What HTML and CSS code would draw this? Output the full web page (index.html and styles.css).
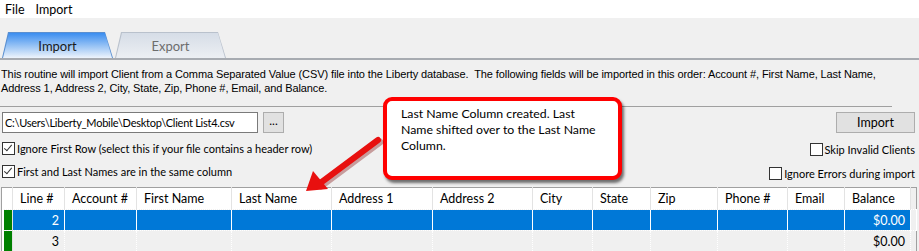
FILE: index.html
```html
<!DOCTYPE html>
<html lang="en">
<head>
    <meta charset="UTF-8">
    <title>Import Clients</title>
    <link rel="stylesheet" href="styles.css">
</head>
<body>

    <div class="menubar">
        <span class="menu-item">File</span>
        <span class="menu-item">Import</span>
    </div>

    <div class="tabs">
        <div class="tab tab-active"><div class="tab-inner">Import</div></div>
        <div class="tab"><div class="tab-inner">Export</div></div>
    </div>

    <p class="description">This routine will import Client from a Comma Separated Value (CSV) file into the Liberty database.&nbsp; The following fields will be imported in this order: Account #, First Name, Last Name, Address 1, Address 2, City, State, Zip, Phone #, Email, and Balance.</p>

    <div class="options">
        <div class="options-left">
            <div class="file-row">
                <div class="file-input">C:\Users\Liberty_Mobile\Desktop\Client List4.csv</div>
                <div class="browse-button">...</div>
            </div>
            <label class="check-row"><span class="box checked"></span>Ignore First Row (select this if your file contains a header row)</label>
            <label class="check-row"><span class="box checked"></span>First and Last Names are in the same column</label>
        </div>
        <div class="options-right">
            <div class="import-button">Import</div>
            <label class="check-row"><span class="box"></span>Skip Invalid Clients</label>
            <label class="check-row"><span class="box"></span>Ignore Errors during import</label>
        </div>
    </div>

    <table class="grid">
        <colgroup>
            <col style="width:11px">
            <col style="width:52px">
            <col style="width:72px">
            <col style="width:95px">
            <col style="width:100px">
            <col style="width:101px">
            <col style="width:100px">
            <col style="width:60px">
            <col style="width:58px">
            <col style="width:67px">
            <col style="width:70px">
            <col style="width:57px">
            <col style="width:66px">
            <col>
        </colgroup>
        <tr class="grid-head">
            <th class="row-head"></th>
            <th>Line #</th>
            <th>Account #</th>
            <th>First Name</th>
            <th>Last Name</th>
            <th>Address 1</th>
            <th>Address 2</th>
            <th>City</th>
            <th>State</th>
            <th>Zip</th>
            <th>Phone #</th>
            <th>Email</th>
            <th>Balance</th>
            <th class="filler"></th>
        </tr>
        <tr class="selected">
            <td class="row-head"><span class="status"></span></td>
            <td class="num">2</td>
            <td></td><td></td><td></td><td></td><td></td><td></td><td></td><td></td><td></td><td></td>
            <td class="num">$0.00</td>
            <td class="filler"></td>
        </tr>
        <tr>
            <td class="row-head"><span class="status"></span></td>
            <td class="num">3</td>
            <td></td><td></td><td></td><td></td><td></td><td></td><td></td><td></td><td></td><td></td>
            <td class="num">$0.00</td>
            <td class="filler"></td>
        </tr>
    </table>

    <!-- annotation drawn over the screenshot -->
    <div class="callout">Last Name Column created. Last Name shifted over to the Last Name Column.</div>
    <svg class="arrow" width="100" height="80" viewBox="0 0 100 80">
        <line x1="83" y1="12" x2="24" y2="56" stroke="#7a0000" stroke-opacity="0.35" stroke-width="7" stroke-linecap="round"/>
        <line x1="81" y1="10" x2="22" y2="54" stroke="#e8100f" stroke-width="6" stroke-linecap="round"/>
        <polygon points="9,61 16,41 31,59" fill="#e8100f"/>
    </svg>

</body>
</html>
```

FILE: styles.css
```css
body {
    margin: 0;
    background: #f0f0f0;
    font-family: Lato, "Noto Sans", sans-serif;
    font-size: 12.5px;
    color: #000;
    overflow: hidden;
    position: relative;
    height: 251px;
}

/* Menu bar */
.menubar {
    background: #fff;
    height: 18px;
    display: flex;
    align-items: center;
    padding-left: 5px;
    gap: 11px;
}

/* Tabs */
.tabs {
    display: flex;
    padding: 14px 0 0 2px;
    height: 26px;
    border-bottom: 2px solid #a7abb1;
}

.tab {
    width: 111px;
    height: 26px;
    margin-right: 2px;
    background: #b9c1cc;
    clip-path: polygon(6px 0, 103px 0, 111px 100%, 0 100%);
    padding: 1px 1px 0 1px;
    box-sizing: border-box;
}

.tab-inner {
    height: 100%;
    background: linear-gradient(#d6dde7, #eceff3);
    clip-path: polygon(6px 0, 102px 0, 109px 100%, 0 100%);
    display: flex;
    align-items: center;
    justify-content: center;
    color: #6d6d6d;
    font-size: 13px;
}

.tab-active {
    background: #5a8fd0;
}

.tab-active .tab-inner {
    background: linear-gradient(#3a8df0, #9dc6f5 55%, #eef4fc);
    color: #1a1a1a;
}

/* Description */
.description {
    margin: 0;
    padding: 7px 1px 11px 1px;
    max-width: 890px;
    font-family: "Liberation Sans", Arial, sans-serif;
    font-size: 11px;
    line-height: 14px;
    letter-spacing: -0.1px;
    border-bottom: 1px solid #a0a0a0;
}

/* Options */
.options {
    display: flex;
    justify-content: space-between;
    padding: 5px 4px 0 2px;
    font-size: 11px;
}

.file-row {
    display: flex;
    gap: 5px;
    margin-bottom: 7px;
}

.file-input {
    width: 252px;
    height: 19px;
    background: #fff;
    border: 1px solid #7a7a7a;
    line-height: 19px;
    padding-left: 2px;
    white-space: nowrap;
    overflow: hidden;
    font-size: 11px;
    letter-spacing: -0.25px;
}

.browse-button {
    width: 19px;
    height: 19px;
    border: 1px solid #adadad;
    background: #e1e1e1;
    text-align: center;
    line-height: 16px;
    font-size: 12px;
}

.check-row {
    display: flex;
    align-items: center;
    height: 16px;
    margin-bottom: 7px;
}

.box {
    width: 11px;
    height: 11px;
    border: 1px solid #333;
    background: #fff;
    margin-right: 2px;
    position: relative;
}

.box.checked::after {
    content: "";
    position: absolute;
    left: 3px;
    top: 0px;
    width: 3px;
    height: 7px;
    border: solid #333;
    border-width: 0 1px 1px 0;
    transform: rotate(40deg);
}

.options-right {
    display: flex;
    flex-direction: column;
    align-items: flex-end;
}

.import-button {
    width: 77px;
    height: 19px;
    border: 1px solid #adadad;
    background: #e1e1e1;
    text-align: center;
    line-height: 19px;
    margin-bottom: 8px;
    font-size: 12.5px;
}

.options-right .check-row {
    margin-bottom: 8px;
}

/* Grid */
.grid {
    margin: -2px 0 0 1px;
    width: 916px;
    border-collapse: collapse;
    table-layout: fixed;
    border: 1px solid #a0a0a0;
    border-bottom: none;
}

.grid th,
.grid td {
    padding: 0 5px;
    height: 20px;
    white-space: nowrap;
    overflow: hidden;
}

.grid-head th {
    background: #fff;
    font-weight: normal;
    text-align: left;
    height: 21px;
    padding-left: 7px;
    border-right: 1px solid #e3e3e3;
}

.grid td {
    background: #f0f0f0;
    border-right: 1px dotted #fff;
    border-top: 1px dotted #fff;
}

.grid .selected td {
    background: #0078d7;
    color: #fff;
    border-right: 1px solid #fff;
}

.grid td.num {
    text-align: right;
}

.grid .row-head {
    padding: 0 0 0 2px;
    background: #fff;
    border-right: 1px solid #e3e3e3;
}

.grid .selected .row-head {
    background: #fff;
    border-right: 1px solid #e3e3e3;
}

.status {
    display: block;
    width: 9px;
    height: 20px;
    background: #008000;
}

.grid .filler {
    background: #f0f0f0;
    border-right: none;
}

.grid .selected .filler {
    background: #f0f0f0;
}

/* Annotation */
.callout {
    position: absolute;
    left: 383px;
    top: 97px;
    width: 203px;
    height: 70px;
    padding: 5px 14px 0 14px;
    background: #fff;
    border: 4px solid #f00;
    border-radius: 9px;
    box-shadow: 2px 3px 3px rgba(0, 0, 0, 0.55);
    line-height: 16px;
    font-size: 12.3px;
}

.arrow {
    position: absolute;
    left: 297px;
    top: 130px;
}
```
